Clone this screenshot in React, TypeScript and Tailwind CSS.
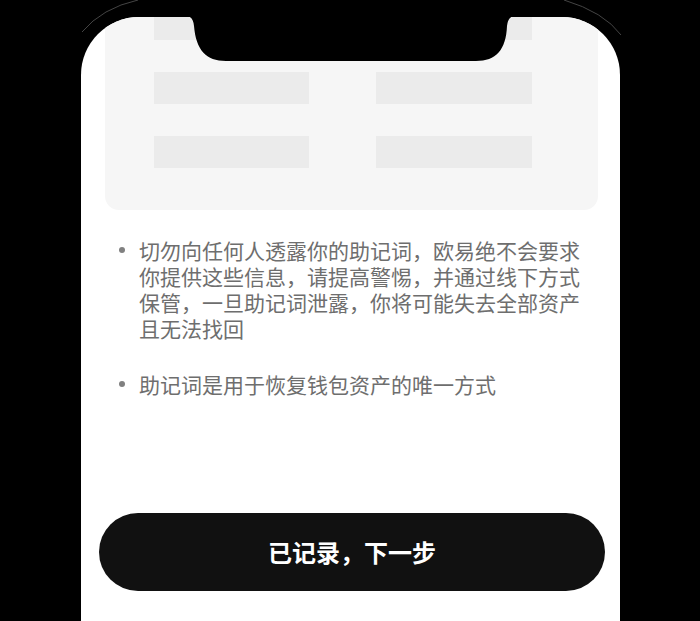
const tips = [
  '切勿向任何人透露你的助记词，欧易绝不会要求你提供这些信息，请提高警惕，并通过线下方式保管，一旦助记词泄露，你将可能失去全部资产且无法找回',
  '助记词是用于恢复钱包资产的唯一方式',
];

function Notch() {
  // black notch cut into the top of the screen
  return (
    <svg
      className="absolute left-0 top-0"
      width="539"
      height="50"
      viewBox="0 0 539 50"
    >
      <path
        d="M99 -1 L105 -1 Q112 -1 113 9 C115 33 125 44 145 44 L395 44 C415 44 425 33 426 9 Q427 -1 434 -1 L440 -1 L440 -5 L99 -5 Z"
        fill="#000"
      />
    </svg>
  );
}

function SkeletonCard() {
  const rows = [0, 1, 2];
  return (
    <div className="mx-[24px] w-[493px] -mt-[20px] rounded-[14px] bg-[#f6f6f6] pl-[49px] pt-[11px] pb-[42px]">
      <div className="grid grid-cols-[155px_156px] gap-x-[67px] gap-y-[32px]">
        {rows.map((r) => (
          <div key={r} className="contents">
            <div className="h-[32px] bg-[#ebebeb]" />
            <div className="h-[32px] bg-[#ebebeb]" />
          </div>
        ))}
      </div>
    </div>
  );
}

export default function App() {
  return (
    <div
      className="relative w-[700px] h-[621px] overflow-hidden bg-black"
      style={{ fontFamily: '"Noto Sans CJK SC", "Noto Sans", sans-serif' }}
    >
      {/* faint outline of the phone body */}
      <svg className="absolute left-0 top-0" width="700" height="60">
        <path d="M82 32 Q102 8 138 0" stroke="#444" strokeWidth="1" fill="none" />
        <path d="M564 0 Q604 12 621 35" stroke="#444" strokeWidth="1" fill="none" />
      </svg>

      <div className="relative ml-[81px] mt-[17px] flex h-[604px] w-[539px] flex-col overflow-hidden rounded-t-[58px] bg-white">
        <SkeletonCard />
        <Notch />

        <ul className="mt-[27px] flex flex-col gap-[30px] pl-[38px]">
          {tips.map((t, i) => (
            <li key={i} className="flex items-start">
              <span className="mt-[10px] h-[6px] w-[6px] shrink-0 rounded-full bg-[#808080]" />
              <p className="ml-[14px] w-[444px] text-[21px] leading-[26px] text-[#6e6e6e]">
                {t}
              </p>
            </li>
          ))}
        </ul>

        <button className="mt-auto mb-[30px] ml-[18px] flex h-[78px] w-[506px] items-center justify-center rounded-full bg-[#111111] text-[24px] font-bold text-white">
          已记录，下一步
        </button>
      </div>
    </div>
  );
}
